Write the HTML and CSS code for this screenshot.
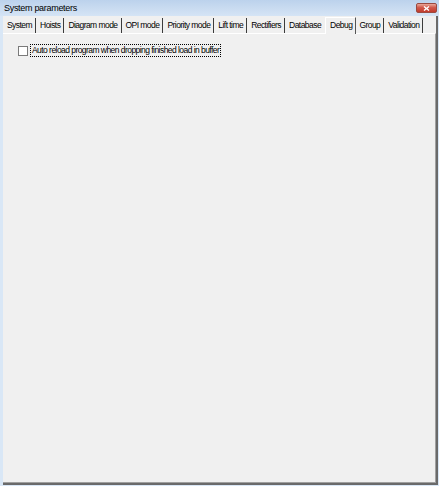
FILE: index.html
```html
<!DOCTYPE html>
<html>
<head>
<meta charset="utf-8">
<link rel="stylesheet" href="styles.css">
</head>
<body>
<div class="window">
  <div class="titlebar">
    <span class="title">System parameters</span>
    <span class="close"><svg width="7" height="5" viewBox="0 0 7 5"><path d="M1 0.5 L6 4.5 M6 0.5 L1 4.5" stroke="#fff" stroke-width="1.4"/></svg></span>
  </div>
  <div class="body">
    <div class="tabs">
      <span class="tab">System</span>
      <span class="tab">Hoists</span>
      <span class="tab">Diagram mode</span>
      <span class="tab">OPI mode</span>
      <span class="tab">Priority mode</span>
      <span class="tab">Lift time</span>
      <span class="tab">Rectifiers</span>
      <span class="tab pre">Database</span>
      <span class="tab active">Debug</span>
      <span class="tab">Group</span>
      <span class="tab">Validation</span>
    </div>
    <div class="panel">
      <label class="check">
        <span class="box"></span>
        <span class="label">Auto reload program when dropping finished load in buffer</span>
      </label>
    </div>
  </div>
</div>
</body>
</html>
```
FILE: styles.css
```css
html, body {
  margin: 0;
  padding: 0;
  background: #f0f0f0;
}
body {
  font-family: "Liberation Sans", Arial, sans-serif;
  font-size: 8.5px;
  letter-spacing: -0.55px;
  color: #000;
}
.window {
  width: 439px;
  height: 486px;
  box-sizing: border-box;
  display: flex;
  flex-direction: column;
  background: #f0f0f0;
  border-left: 3px solid #d9e7f6;
  border-right: 1px solid #d9e7f6;
  border-bottom: 1px solid #d9e7f6;
}
.titlebar {
  height: 16px;
  margin-left: -3px;
  margin-right: -1px;
  padding-left: 4px;
  padding-right: 2px;
  display: flex;
  align-items: center;
  justify-content: space-between;
  background: linear-gradient(#bcd2ec, #d5e4f5);
}
.title {
  font-size: 9px;
  letter-spacing: -0.3px;
  color: #000;
}
.close {
  width: 21px;
  height: 10px;
  border-radius: 2px;
  border: 1px solid #9a4a40;
  box-sizing: border-box;
  background: linear-gradient(#eaa89a, #d0584a 45%, #c23a2c);
  display: flex;
  align-items: center;
  justify-content: center;
}
.body {
  flex: 1;
  display: flex;
  flex-direction: column;
  border-right: 2px solid #6a6a6a;
  border-bottom: 2px solid #6a6a6a;
}
.tabs {
  height: 17px;
  display: flex;
  align-items: flex-end;
  padding-left: 4px;
}
.tab {
  height: 15px;
  line-height: 14px;
  padding: 0 3px 0 0;
  border-right: 1px solid #3c3c3c;
  margin-right: 4px;
  white-space: nowrap;
}
.tab.pre {
  border-right: none;
  margin-right: 1px;
}
.tab.active {
  height: 17px;
  line-height: 15px;
  border-right: 1px solid #555;
  border-left: 1px solid #fff;
  border-top: 1px solid #fff;
  box-sizing: border-box;
  padding: 0 3px 0 4px;
  margin-right: 3px;
  background: #f0f0f0;
  position: relative;
  top: 1px;
}
.panel {
  flex: 1;
  border-top: 1px solid #fff;
  border-right: 1px solid #a0a0a0;
  border-bottom: 1px solid #a0a0a0;
  padding: 10px 0 0 15px;
}
.check {
  display: flex;
  align-items: center;
  gap: 2px;
}
.box {
  width: 10px;
  height: 10px;
  box-sizing: border-box;
  border: 1px solid #7a7a7a;
  background: #fff;
}
.label {
  border: 1px dotted #000;
  padding: 0 1px;
  line-height: 11px;
}
```
